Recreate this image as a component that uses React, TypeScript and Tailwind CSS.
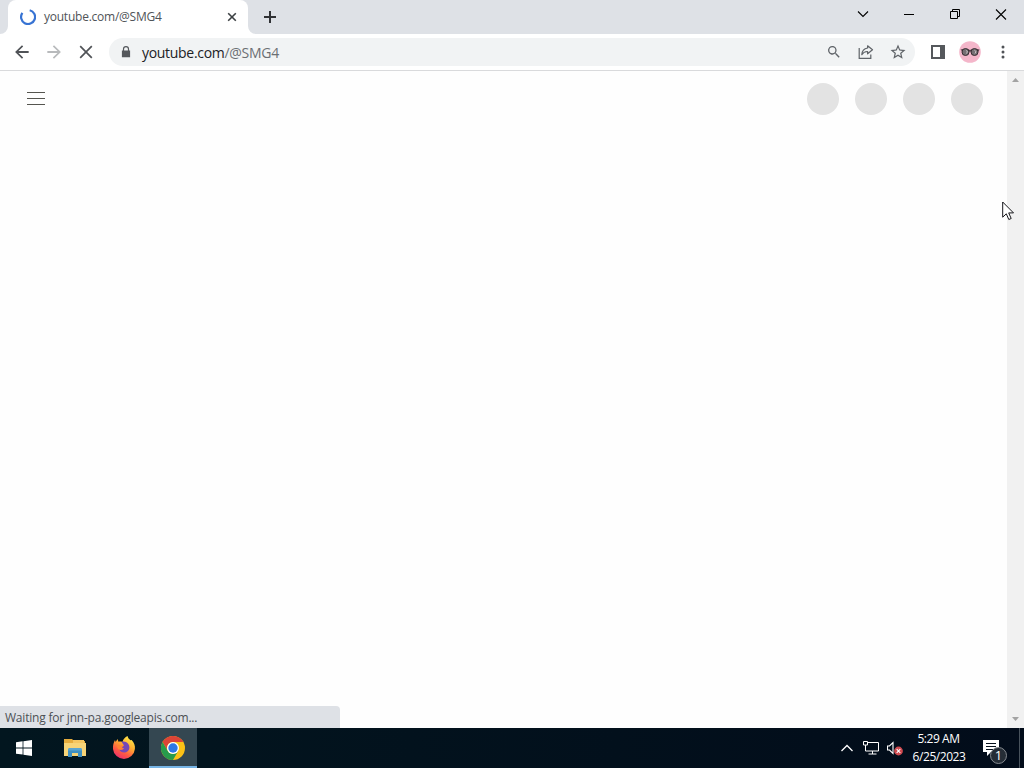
import type { ReactNode } from "react";

type IconProps = {
  size?: number;
  className?: string;
  children: ReactNode;
};

const Icon = ({ size = 20, className = "", children }: IconProps) => (
  <svg
    width={size}
    height={size}
    viewBox="0 0 24 24"
    fill="currentColor"
    className={`shrink-0 ${className}`}
  >
    {children}
  </svg>
);

const TabStrip = () => (
  <header className="flex h-[34px] items-start bg-[#dee1e6] pl-2">
    <div className="relative flex h-[34px] w-60 items-center rounded-t-lg bg-white pr-[10px] pl-3">
      {/* curved feet of the active tab */}
      <svg className="absolute bottom-0 -left-2" width="8" height="8">
        <path d="M8 0v8H0a8 8 0 0 0 8-8z" fill="#fff" />
      </svg>
      <svg className="absolute -right-2 bottom-0" width="8" height="8">
        <path d="M0 0v8h8a8 8 0 0 1-8-8z" fill="#fff" />
      </svg>
      <svg width="16" height="16" viewBox="0 0 16 16" fill="none">
        <path
          d="M9.7 1.2A7 7 0 1 1 2.4 3.9"
          stroke="#3773d3"
          strokeWidth="2.2"
        />
      </svg>
      <span className="ml-2 text-[12px] tracking-[-0.24px] whitespace-nowrap text-[#505458]">
        youtube.com/@SMG4
      </span>
      <svg className="ml-auto" width="12" height="12" viewBox="0 0 12 12">
        <path
          d="M2.2 2.2l7.6 7.6M9.8 2.2L2.2 9.8"
          stroke="#3c4043"
          strokeWidth="1.6"
        />
      </svg>
    </div>
    <svg className="mt-[10px] ml-[15px]" width="14" height="14">
      <path d="M7 1v12M1 7h12" stroke="#303235" strokeWidth="2" />
    </svg>
    <div className="ml-auto flex text-black">
      <svg width="46" height="30" fill="none" stroke="currentColor">
        <path d="M18 11.5l5 5 5-5" strokeWidth="1.1" />
      </svg>
      <svg width="46" height="30" fill="none" stroke="currentColor">
        <path d="M18 14.5h10" />
      </svg>
      <svg width="46" height="30" fill="none" stroke="currentColor">
        <path d="M18.5 11.5h7v7h-7zM20.5 11.5v-2h7v7h-2" />
      </svg>
      <svg width="46" height="30" fill="none" stroke="currentColor">
        <path d="M18 9.5l10 10M28 9.5l-10 10" strokeWidth="1.1" />
      </svg>
    </div>
  </header>
);

const Avatar = () => (
  <svg width="22" height="22" viewBox="0 0 22 22" className="shrink-0">
    <circle cx="11" cy="11" r="10.8" fill="#f4b6ca" />
    <path d="M1.5 8.5l3-.5h4l2.5 1 2.5-1h4l3 .5-1 2-16 .2z" fill="#55414b" />
    <circle cx="6.5" cy="11" r="3.5" fill="#756f73" stroke="#382d32" />
    <circle cx="15.5" cy="11" r="3.5" fill="#756f73" stroke="#382d32" />
    <path
      d="M7 9.5l1.5 1-1 2M15.5 9.5l1.5 1-1 2"
      fill="none"
      stroke="#c6c0c2"
    />
  </svg>
);

const Toolbar = () => (
  <div className="flex h-[37px] items-center border-b border-[#d9dadc] bg-white pl-3 text-[#5f6368]">
    <Icon className="text-[#505357]">
      <path d="M20 10.8H7.8l5.6-5.5L12 3.9 3.7 12l8.3 8.1 1.4-1.4-5.6-5.5H20z" />
    </Icon>
    <Icon className="ml-3 text-[#b8babc]">
      <path d="M4 10.8h12.2l-5.6-5.5L12 3.9l8.3 8.1-8.3 8.1-1.4-1.4 5.6-5.5H4z" />
    </Icon>
    <svg
      width="20"
      height="20"
      className="ml-3 shrink-0 text-[#505357]"
      fill="none"
      stroke="currentColor"
    >
      <path d="M4.2 4.2l11.6 11.6M15.8 4.2L4.2 15.8" strokeWidth="1.7" />
    </svg>
    <div className="ml-[13px] flex h-7 w-[806px] items-center rounded-full bg-[#f1f3f4] pr-[9px] pl-[10px]">
      <svg width="14" height="14" viewBox="0 0 14 14" fill="#55585c">
        <path d="M2.9 5.4h1V4.1a3.1 3.1 0 0 1 6.2 0v1.3h1v6.8H2.9zM5.1 5.4h3.8V4.1a1.9 1.9 0 0 0-3.8 0z" />
      </svg>
      <span className="ml-[9px] text-[14px] tracking-[-0.3px] whitespace-nowrap text-[#202124]">
        youtube.com<span className="text-[#6b6f73]">/@SMG4</span>
      </span>
      <div className="ml-auto flex items-center gap-4">
        <Icon size={16}>
          <path d="M15.5 14h-.8l-.3-.3A6.5 6.5 0 1 0 13.7 14.4l.3.3v.8l5 5 1.5-1.5-5-5zm-6 0a4.5 4.5 0 1 1 0-9 4.5 4.5 0 0 1 0 9z" />
        </Icon>
        <svg
          width="16"
          height="16"
          viewBox="0 0 16 16"
          fill="none"
          stroke="currentColor"
          strokeWidth="1.2"
        >
          <path d="M1.2 4v10.3h11.6v-3.8" />
          <path
            d="M9.6 1.8l4.9 4-4.9 4V7.5C6.9 7.4 5 8.6 3.8 10.7c.2-3.6 2.2-6.2 5.8-6.7z"
            strokeLinejoin="round"
          />
        </svg>
        <Icon size={18} className="-mx-px">
          <path d="M22 9.24l-7.19-.62L12 2 9.19 8.63 2 9.24l5.46 4.73L5.82 21 12 17.27 18.18 21l-1.63-7.03L22 9.24zM12 15.4l-3.76 2.27 1-4.28-3.32-2.88 4.38-.38L12 6.1l1.71 4.04 4.38.38-3.32 2.88 1 4.28L12 15.4z" />
        </Icon>
      </div>
    </div>
    <svg width="14" height="14" className="ml-4 shrink-0" fill="none">
      <path d="M1 1h12v12H1z" stroke="#55585c" strokeWidth="2" />
      <path d="M9 1h4v12H9z" fill="#55585c" />
    </svg>
    <div className="ml-[14px]">
      <Avatar />
    </div>
    <svg width="4" height="14" className="ml-[19.5px]" fill="#505357">
      <circle cx="2" cy="2" r="1.5" />
      <circle cx="2" cy="7" r="1.5" />
      <circle cx="2" cy="12" r="1.5" />
    </svg>
  </div>
);

const Page = () => (
  <main className="relative flex min-h-0 flex-1 bg-[#fefefe]">
    <div className="flex h-14 flex-1 items-center justify-between pr-6 pl-[27px]">
      <svg width="18" height="14" className="-mt-px" stroke="#55554f">
        <path d="M0 .5h18M0 6.5h18M0 12.5h18" />
      </svg>
      <div className="flex gap-4">
        {[0, 1, 2, 3].map((n) => (
          <div key={n} className="size-8 rounded-full bg-[#e3e3e3]" />
        ))}
      </div>
    </div>
    <div className="flex w-[17px] flex-col items-center justify-between bg-[#f1f1f1] py-[7px]">
      <svg width="7" height="4" fill="#a3a3a3">
        <path d="M0 4l3.5-4L7 4z" />
      </svg>
      <svg width="7" height="4" fill="#a3a3a3">
        <path d="M0 0l3.5 4L7 0z" />
      </svg>
    </div>
    <div className="absolute bottom-0 left-0 flex h-[22px] w-[340px] items-center rounded-tr bg-[#dee1e6] pt-[2px] pl-[5px] text-[12px] tracking-[-0.21px] text-[#4c5054]">
      Waiting for jnn-pa.googleapis.com...
    </div>
    {/* mouse pointer */}
    <svg
      className="absolute top-[130px] left-[1002px]"
      width="13"
      height="20"
      fill="#fff"
      stroke="#16161a"
    >
      <path d="M.7 1v15.2l3.6-3.4 2.5 5.7 2.4-1-2.5-5.6h4.8z" />
    </svg>
  </main>
);

const FolderIcon = () => (
  <svg width="22" height="20" viewBox="0 0 22 20">
    <path d="M0 1h8l2 2h11v15H0z" fill="#e5ac3d" />
    <path d="M9 2h11v3H9z" fill="#f4c661" />
    <path d="M0 5h22v13H0z" fill="#f7d477" />
    <path d="M4 19v-7.5L5.5 10h11l1.5 1.5V19h-4v-4H8v4z" fill="#3f8fc0" />
    <path d="M4 12.5h14V11l-1-1H5l-1 1z" fill="#5aa5d0" />
  </svg>
);

const FirefoxIcon = () => (
  <svg width="24" height="24" viewBox="0 0 24 24">
    <defs>
      <linearGradient id="fox" x1=".8" y1="0" x2=".25" y2="1">
        <stop offset="0" stopColor="#fff04b" />
        <stop offset=".4" stopColor="#ffac30" />
        <stop offset=".7" stopColor="#ff5a43" />
        <stop offset="1" stopColor="#ec2a70" />
      </linearGradient>
    </defs>
    <path
      d="M15.5 0c.4 2 1.5 3 3 4.2L19.6 4c2.5 2.6 3.7 5.6 3.3 9A11 11 0 0 1 1 13C.8 9.2 1.6 6.4 3 4l.7 2L5.5 3l1 2.7c1.3-.3 2.7-.1 4 .3.5-2.8 2.6-4.8 5-6z"
      fill="url(#fox)"
    />
    <path
      d="M9.5 5.8c4.5-1.4 8.3 2 7.9 6.3-.4 3-2.6 4.4-5 4.4-2.6 0-4.3-1.3-5.2-3 1.9.8 4 .2 4.8-1.3-1.8 0-2.5-.8-2.2-1.6l2.2-1z"
      fill="#7548b8"
    />
    <path
      d="M4.5 9.3c1.5-1.1 3-.5 3.9.1l3.4-.2c-.2 1.2-1.4 1.6-2.2 2.2-.3.7.4 1.2 1.2 1.3-.9 1.3-3.2 1.6-4.7.4z"
      fill="#ff8234"
    />
  </svg>
);

const ChromeIcon = () => (
  <svg width="24" height="24" viewBox="0 0 24 24">
    <circle cx="12" cy="12" r="12" fill="#fbc116" />
    <path d="M1.6 6A12 12 0 0 1 22.4 6H12a6 6 0 0 0-5.2 9z" fill="#dc4437" />
    <path
      d="M1.6 6A12 12 0 0 0 12 24l5.2-9a6 6 0 0 1-10.4 0z"
      fill="#279b4c"
    />
    <circle cx="12" cy="12" r="6" fill="#fff" />
    <circle cx="12" cy="12" r="4.7" fill="#2d78e5" />
  </svg>
);

const Taskbar = () => (
  <footer className="flex h-10 bg-gradient-to-r from-[#02161f] to-[#020c1a] text-white">
    <div className="flex w-12 items-center justify-center">
      <svg width="16" height="16" viewBox="0 0 16 16" fill="currentColor">
        <path d="M0 2.2L6.6 1.3v6.2H0zM7.4 1.2L16 0v7.5H7.4zM0 8.4h6.6v6.2L0 13.7zM7.4 8.4H16V16l-8.6-1.2z" />
      </svg>
    </div>
    <div className="ml-[3px] flex w-[48px] items-center justify-center">
      <FolderIcon />
    </div>
    <div className="flex w-[50px] items-center justify-center">
      <FirefoxIcon />
    </div>
    <div className="flex w-12 items-center justify-center border-b-2 border-[#76b4e5] bg-[#344751] pt-[2px]">
      <ChromeIcon />
    </div>
    <div className="ml-auto flex items-center">
      <svg width="12" height="8" fill="none" stroke="currentColor">
        <path d="M.5 7L6 1.5 11.5 7" strokeWidth="1.3" />
      </svg>
      <svg
        width="16"
        height="14"
        className="ml-[10px]"
        fill="none"
        stroke="currentColor"
      >
        <path d="M5 1.5h10.5v8.5H2.5V4M5.5 13h8M9.5 10v3" />
        <path d="M.5.5h4v3.5h-4z" />
      </svg>
      <svg width="17" height="16" className="ml-[8px]" fill="none">
        <path
          d="M.5 6h2L6 2.5v11L2.5 10h-2z"
          stroke="currentColor"
          strokeWidth="1.1"
        />
        <circle cx="11.5" cy="11" r="4.4" fill="#cf4a50" />
        <path
          d="M9.7 9.2l3.6 3.6M13.3 9.2l-3.6 3.6"
          stroke="#fff"
          strokeWidth="1.1"
        />
      </svg>
      <div className="mr-[1px] ml-[6px] w-[58px] text-center text-[12px] leading-[18px] tracking-[-0.45px] whitespace-nowrap">
        <div className="-ml-px">5:29 AM</div>
        <div>6/25/2023</div>
      </div>
      <div className="relative ml-[13px] h-10 w-[42px]">
        <svg
          className="absolute top-3 left-[1px]"
          width="17"
          height="16"
          viewBox="0 0 17 16"
        >
          <path d="M0 0h16v12H8l-4 4v-4H0z" fill="#fff" />
          <path d="M3 3.5h10M3 6.5h10M3 9.5h7" stroke="#06111c" />
        </svg>
        <span className="absolute top-[19px] left-[8px] flex size-[17px] items-center justify-center rounded-full border border-[#858a90] bg-[#252d36] text-[13px] leading-none">
          1
        </span>
        <div className="absolute top-0 right-[4px] h-10 w-px bg-[#48525c]" />
      </div>
    </div>
  </footer>
);

const App = () => {
  return (
    <div className="flex h-screen w-full flex-col overflow-hidden bg-white font-['Open_Sans','Noto_Sans',sans-serif]">
      <TabStrip />
      <Toolbar />
      <Page />
      <Taskbar />
    </div>
  );
};

export default App;
